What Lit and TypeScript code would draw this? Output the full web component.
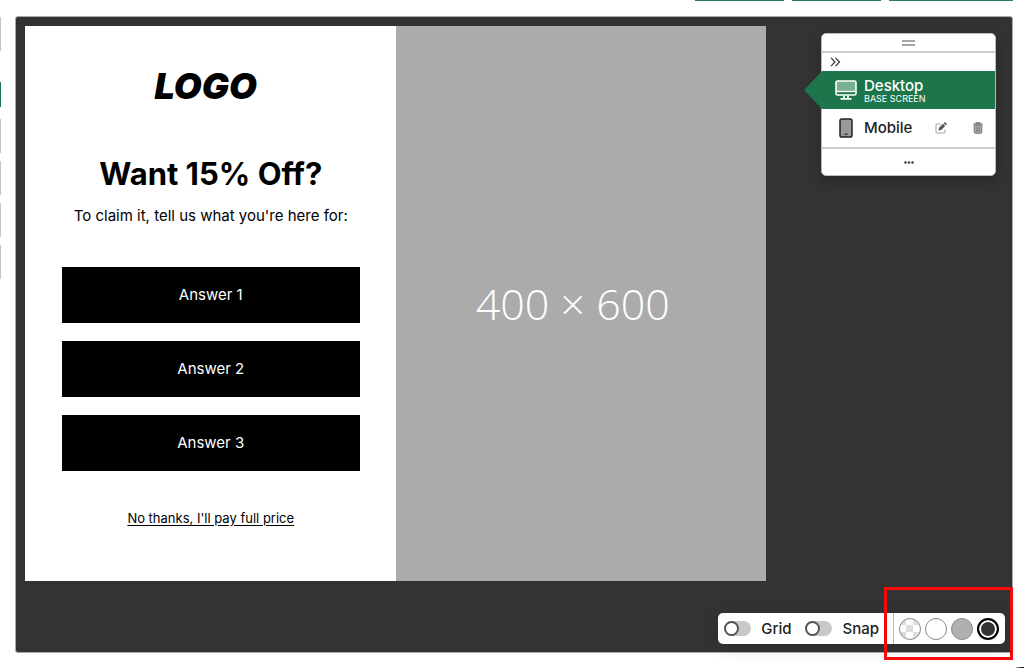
import { LitElement, html, css, svg } from "lit";
import { customElement, state } from "lit/decorators.js";

const ANSWERS = ["Answer 1", "Answer 2", "Answer 3"];
const SWATCHES = ["Transparent", "White", "Gray", "Dark"];

@customElement("popup-preview")
class PopupPreview extends LitElement {
  static styles = css`
    :host {
      display: grid;
      grid-template-columns: 1fr 1fr;
      font-family: Inter, "Open Sans", sans-serif;
      color: #000;
    }
    .form {
      display: flex;
      flex-direction: column;
      align-items: center;
      background: #fff;
      padding: 40px 36px 53px 37px;
    }
    .logo {
      padding-right: 10px;
      font-size: 36px;
      line-height: 40px;
      font-weight: 900;
      font-style: italic;
    }
    h1 {
      margin: 48px 0 0;
      font-size: 31px;
      line-height: 40px;
      font-weight: 700;
      white-space: nowrap;
    }
    p {
      margin: 12px 0 0;
      font-size: 15px;
      line-height: 20px;
      white-space: nowrap;
    }
    .answers {
      display: grid;
      gap: 18px;
      align-self: stretch;
      margin: 41px 0 37px;
    }
    .answer {
      height: 56px;
      border: 0;
      background: #000;
      color: #fff;
      font: 400 15px/20px Inter, "Open Sans", sans-serif;
    }
    .decline {
      font-size: 13px;
      line-height: 20px;
      color: #000;
      text-underline-offset: 2px;
    }
    .placeholder {
      display: grid;
      place-items: center;
      padding-right: 16px;
      background: #ababab;
      color: #fff;
      font: 300 43px/60px "Open Sans", sans-serif;
    }
  `;

  render() {
    return html`
      <section class="form">
        <div class="logo">LOGO</div>
        <h1>Want 15% Off?</h1>
        <p>To claim it, tell us what you're here for:</p>
        <div class="answers">
          ${ANSWERS.map((a) => html`<button class="answer" type="button">${a}</button>`)}
        </div>
        <a class="decline" href="#">No thanks, I'll pay full price</a>
      </section>
      <div class="placeholder">400 × 600</div>
    `;
  }
}

@customElement("screen-panel")
class ScreenPanel extends LitElement {
  static styles = css`
    :host {
      display: block;
      border: 1px solid #bbb;
      border-radius: 5px;
      background: #fff;
      color: #222;
      font-family: Lato, sans-serif;
      box-sizing: border-box;
      box-shadow: 0 4px 14px rgba(0, 0, 0, 0.25);
    }
    button {
      display: flex;
      align-items: center;
      border: 0;
      padding: 0;
      background: none;
      color: inherit;
      font: inherit;
    }
    svg {
      display: block;
    }
    .handle {
      width: 100%;
      height: 19px;
      justify-content: center;
      border-bottom: 2px solid #ccc;
    }
    .collapse {
      height: 18px;
      padding-left: 8px;
    }
    .row {
      position: relative;
      display: flex;
      align-items: center;
      height: 38px;
      padding: 0 11px 0 13px;
    }
    .name {
      gap: 7px;
      flex: 1;
      text-align: left;
    }
    .active {
      background: #1d754b;
      color: #fff;
    }
    .active::before {
      content: "";
      position: absolute;
      right: 100%;
      top: 0;
      width: 18px;
      height: 100%;
      background: #1d754b;
      clip-path: polygon(100% 0, 100% 100%, 0 50%);
    }
    .label {
      display: grid;
      font: 500 15px/16px Inter, sans-serif;
    }
    .sub {
      font: 400 9px/9px Inter, sans-serif;
    }
    .actions {
      display: flex;
      gap: 25px;
    }
    .more {
      width: 100%;
      height: 28px;
      justify-content: center;
      border-top: 2px solid #ccc;
    }
  `;

  render() {
    return html`
      <button class="handle" type="button" aria-label="Move panel">
        ${svg`<svg width="13" height="6" viewBox="0 0 13 6"><path d="M0 1h13M0 5h13" stroke="#888" stroke-width="1.3"/></svg>`}
      </button>
      <button class="collapse" type="button" aria-label="Collapse panel">
        ${svg`<svg width="11" height="10" viewBox="0 0 11 10"><path d="M1 .8 5 5 1 9.2M5.5 .8 9.5 5l-4 4.2" fill="none" stroke="#333" stroke-width="1.2"/></svg>`}
      </button>
      <div class="row active">
        <button class="name" type="button">
          ${svg`<svg width="22" height="20" viewBox="0 0 22 20"><rect x="1" y="1" width="20" height="14" rx="1.6" fill="#78b093"/><path d="M1 11.500h20V14a1 1 0 0 1-1 1H2a1 1 0 0 1-1-1z" fill="#1d754b"/><rect x="1" y="1" width="20" height="14" rx="1.600" fill="none" stroke="#fff" stroke-width="1.600"/><path d="M1 11.500h20" stroke="#fff" stroke-width="1.400"/><path d="M9 15.500v3M13 15.500v3M5.500 18.800h11" stroke="#fff" stroke-width="1.800"/></svg>`}
          <span class="label">Desktop<span class="sub">BASE SCREEN</span></span>
        </button>
      </div>
      <div class="row">
        <button class="name" type="button">
          ${svg`<svg width="22" height="20" viewBox="0 0 22 20"><rect x="5" y="1" width="12" height="18" rx="1.8" fill="#999" stroke="#222" stroke-width="1.5"/><path d="M9.500 16.200h3" stroke="#222" stroke-width="1.2"/></svg>`}
          <span class="label">Mobile</span>
        </button>
        <div class="actions">
          <button type="button" aria-label="Rename screen">
            ${svg`<svg width="12" height="12" viewBox="0 0 12 12"><path d="M6 2H2Q1 2 1 3v7q0 1 1 1h7q1 0 1-1V7.500" fill="none" stroke="#aaa" stroke-width="1.1"/><path d="M3.500 8.500l.5-2.700L8 1.800l2.200 2.200-4 4zM8.700 1.200l.6-.6q.6-.5 1.200 0l1 1q.5.600 0 1.200l-.6.600z" fill="#555"/></svg>`}
          </button>
          <button type="button" aria-label="Delete screen">
            ${svg`<svg width="12" height="12" viewBox="0 0 12 12"><path d="M4.200 1.800V.8h3.600v1M1.200 2.200h9.600" fill="none" stroke="#777" stroke-width="1.200"/><path d="M2.200 3.200h7.600V10q0 1.300-1.300 1.300h-5Q2.200 11.300 2.200 10z" fill="#aaa" stroke="#777"/><path d="M4.500 4.500V10M6 4.500V10M7.500 4.500V10" stroke="#777" stroke-width=".7"/></svg>`}
          </button>
        </div>
      </div>
      <button class="more" type="button" aria-label="More options">
        ${svg`<svg width="10" height="3" viewBox="0 0 10 3" fill="#333"><circle cx="1.500" cy="1.500" r="1.200"/><circle cx="5" cy="1.500" r="1.200"/><circle cx="8.500" cy="1.500" r="1.200"/></svg>`}
      </button>
    `;
  }
}

@customElement("canvas-toolbar")
class CanvasToolbar extends LitElement {
  @state() private selected = "Dark";

  static styles = css`
    :host {
      display: flex;
      align-items: center;
      height: 31px;
      padding: 0 6px;
      border-radius: 5px;
      background: #fff;
      color: #222;
      font: 500 15px/20px Inter, sans-serif;
      box-shadow: 0 4px 18px rgba(0, 0, 0, 0.12);
    }
    input {
      appearance: none;
      margin: 0;
    }
    .option {
      display: flex;
      align-items: center;
      gap: 10px;
      margin-right: 14px;
    }
    .switch {
      display: flex;
      align-items: center;
      width: 27px;
      height: 15px;
      border-radius: 8px;
      background: #c8c8c8;
    }
    .switch::before {
      content: "";
      box-sizing: border-box;
      width: 15px;
      height: 15px;
      border: 2px solid #555;
      border-radius: 50%;
      background: #fff;
    }
    .switch:checked {
      flex-direction: row-reverse;
      background: #1d754b;
    }
    .swatches {
      display: flex;
      align-items: center;
      gap: 4px;
      height: 100%;
      padding-left: 5px;
      border-left: 1px solid #bbb;
    }
    .swatch {
      box-sizing: border-box;
      width: 22px;
      height: 22px;
      border: 1px solid #8a8a8a;
      border-radius: 50%;
    }
    .transparent {
      background: repeating-conic-gradient(#fff 0 25%, #ddd 0 50%) 6px 6px / 14px 14px;
    }
    .white {
      background: #fff;
    }
    .gray {
      background: #b0b0b0;
    }
    .dark {
      background: #333;
    }
    .swatch:checked {
      border: 2px solid #000;
      box-shadow: inset 0 0 0 2px #fff;
    }
  `;

  render() {
    return html`
      ${["Grid", "Snap"].map(
        (name) => html`<label class="option"><input class="switch" type="checkbox" />${name}</label>`
      )}
      <div class="swatches">
        ${SWATCHES.map(
          (name) => html`<input
            class="swatch ${name.toLowerCase()}"
            type="radio"
            name="background"
            aria-label="${name} background"
            .checked=${this.selected === name}
            @change=${() => (this.selected = name)}
          />`
        )}
      </div>
    `;
  }
}

@customElement("app-root")
class AppRoot extends LitElement {
  static styles = css`
    :host {
      position: relative;
      display: grid;
      grid-template: 16px 1fr / 15px 1fr;
      box-sizing: border-box;
      height: 100vh;
      padding: 0 11px 15px 0;
      overflow: hidden;
      background: #fff;
    }
    .top {
      grid-column: 1 / -1;
      display: flex;
      justify-content: flex-end;
      gap: 8px;
    }
    .tab {
      width: 89px;
      height: 1px;
      background: #2b805a;
    }
    .wide {
      width: 124px;
    }
    .rail {
      display: flex;
      flex-direction: column;
      gap: 8px;
      padding-top: 1px;
    }
    .tool {
      width: 1px;
      height: 34px;
      background: #c4c4c4;
    }
    .current {
      height: 25px;
      margin: 23px 0 4px;
      background: #1d754b;
    }
    .canvas {
      position: relative;
      display: flex;
      align-items: flex-start;
      padding: 9px;
      border: 1px solid #aaa;
      border-radius: 3px;
      background: #333;
    }
    .preview {
      flex: 0 1 741px;
    }
    .panel {
      position: absolute;
      top: 16px;
      right: 16px;
      width: 175px;
    }
    .toolbar {
      position: absolute;
      right: 7px;
      bottom: 8px;
    }
    .highlight {
      position: absolute;
      right: -1px;
      bottom: -8px;
      box-sizing: border-box;
      width: 129px;
      height: 73px;
      border: 3px solid #f50a0a;
    }
    .launcher {
      position: absolute;
      right: -22px;
      bottom: -47px;
      width: 48px;
      height: 48px;
      border-radius: 50%;
      background: #222;
    }
  `;

  render() {
    return html`
      <div class="top">
        <span class="tab"></span><span class="tab"></span><span class="tab wide"></span>
      </div>
      <div class="rail">
        <span class="tool"></span><span class="tool current"></span>
        <span class="tool"></span><span class="tool"></span><span class="tool"></span><span class="tool"></span>
      </div>
      <main class="canvas">
        <popup-preview class="preview"></popup-preview>
        <screen-panel class="panel"></screen-panel>
        <canvas-toolbar class="toolbar"></canvas-toolbar>
        <div class="highlight"></div>
      </main>
      <div class="launcher"></div>
    `;
  }
}
